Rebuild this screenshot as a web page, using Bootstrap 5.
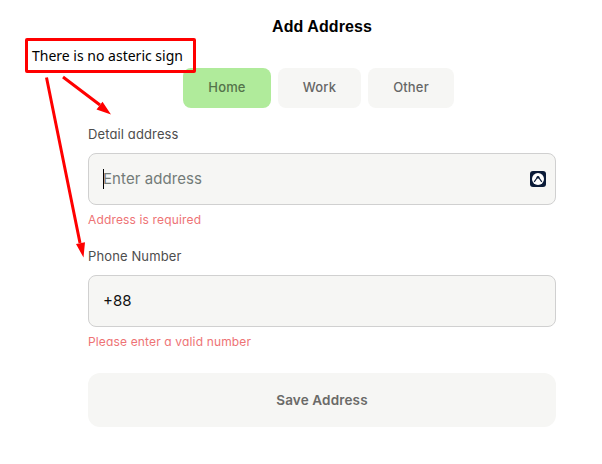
<!DOCTYPE html>
<html lang="en">
<head>
<meta charset="utf-8">
<meta name="viewport" content="width=device-width, initial-scale=1">
<title>Add Address</title>
<link href="https://cdn.jsdelivr.net/npm/bootstrap@5.3.0/dist/css/bootstrap.min.css" rel="stylesheet">
<style>
body{width:602px;height:464px;overflow:hidden;font-family:Inter,"Open Sans",sans-serif;font-feature-settings:"cv11";background:#fff}
.address-form{width:468px;margin-left:88px;padding-top:16px}
.form-title{font:bold 16px/22px "Liberation Sans",Arial,sans-serif;letter-spacing:.08px;color:#000;margin-bottom:30px}
.kinds{gap:7px;margin-left:95px}
.kind{height:40px;border:0;border-radius:8px;background:#f6f6f4;color:#666;font-size:13px;font-weight:500;letter-spacing:.15px;padding:0}
.kind.home{width:88px;background:#b0eb9b;color:#54734a}
.kind.work{width:83px}
.kind.other{width:86px}
.field-group{margin-top:16px}
.field-group + .field-group{margin-top:17px}
.field-label{display:block;font-size:13px;line-height:20px;letter-spacing:.12px;color:#4d4d4d;margin-bottom:9px}
.field-input,.field-input:focus{height:52px;border:1px solid #d0d0d0;border-radius:8px;background:#f6f6f4;font-size:15px;color:#111;padding:0 14px 2px;box-shadow:none}
.field-input::placeholder{color:#737b78;opacity:1}
.address-input{letter-spacing:.08px}
.field-error{font-size:12px;line-height:18px;letter-spacing:.15px;color:#ee7375;margin-top:6px}
.caret{left:15px;top:16px;width:1px;height:20px;background:#000}
.fill-icon{right:10px;top:18px;width:16px;height:16px}
.save-btn{height:54px;border:0;border-radius:12px;background:#f6f6f4;color:#6a6a68;font-size:13.5px;font-weight:600;letter-spacing:.15px;margin-top:22px}
.note{left:25px;top:38px;width:171px;height:35px;border:3px solid #f00;border-radius:2px;color:#000;font:14px/30px "Noto Sans","Open Sans",sans-serif;padding-left:4px;white-space:nowrap}
</style>
</head>
<body class="position-relative">
<main class="address-form d-flex flex-column">
  <h1 class="form-title text-center">Add Address</h1>
  <div class="kinds d-flex">
    <button class="kind home btn">Home</button>
    <button class="kind work btn">Work</button>
    <button class="kind other btn">Other</button>
  </div>
  <div class="field-group">
    <label class="field-label" for="addr">Detail address</label>
    <div class="position-relative">
      <input id="addr" class="form-control field-input address-input" placeholder="Enter address">
      <span class="caret position-absolute"></span>
      <svg class="fill-icon position-absolute" viewBox="0 0 16 16" aria-hidden="true">
        <rect width="16" height="16" rx="3" fill="#0b1b38"/>
        <circle cx="8" cy="8" r="6" fill="#fff"/>
        <path d="M7.300 6.500 4.200 10.800M8.700 6.500 11.800 10.800" fill="none" stroke="#0b1b38" stroke-width="1.2"/>
        <circle cx="8" cy="6.300" r="1.400" fill="#0b1b38"/>
      </svg>
    </div>
    <div class="field-error">Address is required</div>
  </div>
  <div class="field-group">
    <label class="field-label" for="phone">Phone Number</label>
    <input id="phone" class="form-control field-input" value="+88">
    <div class="field-error">Please enter a valid number</div>
  </div>
  <button class="save-btn btn w-100">Save Address</button>
</main>
<div class="note position-absolute">There is no asteric sign</div>
<svg class="position-absolute top-0 start-0" width="602" height="464" aria-hidden="true">
  <g stroke="#f00" stroke-width="3" fill="#f00">
    <path d="M46.500 77.500 80 243M63 77 100 105"/>
    <path stroke="none" d="M83.500 257.500 76 244 85 242.300ZM111 114.500 96.500 109.500 102.500 101.700Z"/>
  </g>
</svg>
<script src="https://cdn.jsdelivr.net/npm/bootstrap@5.3.0/dist/js/bootstrap.bundle.min.js"></script>
</body>
</html>
